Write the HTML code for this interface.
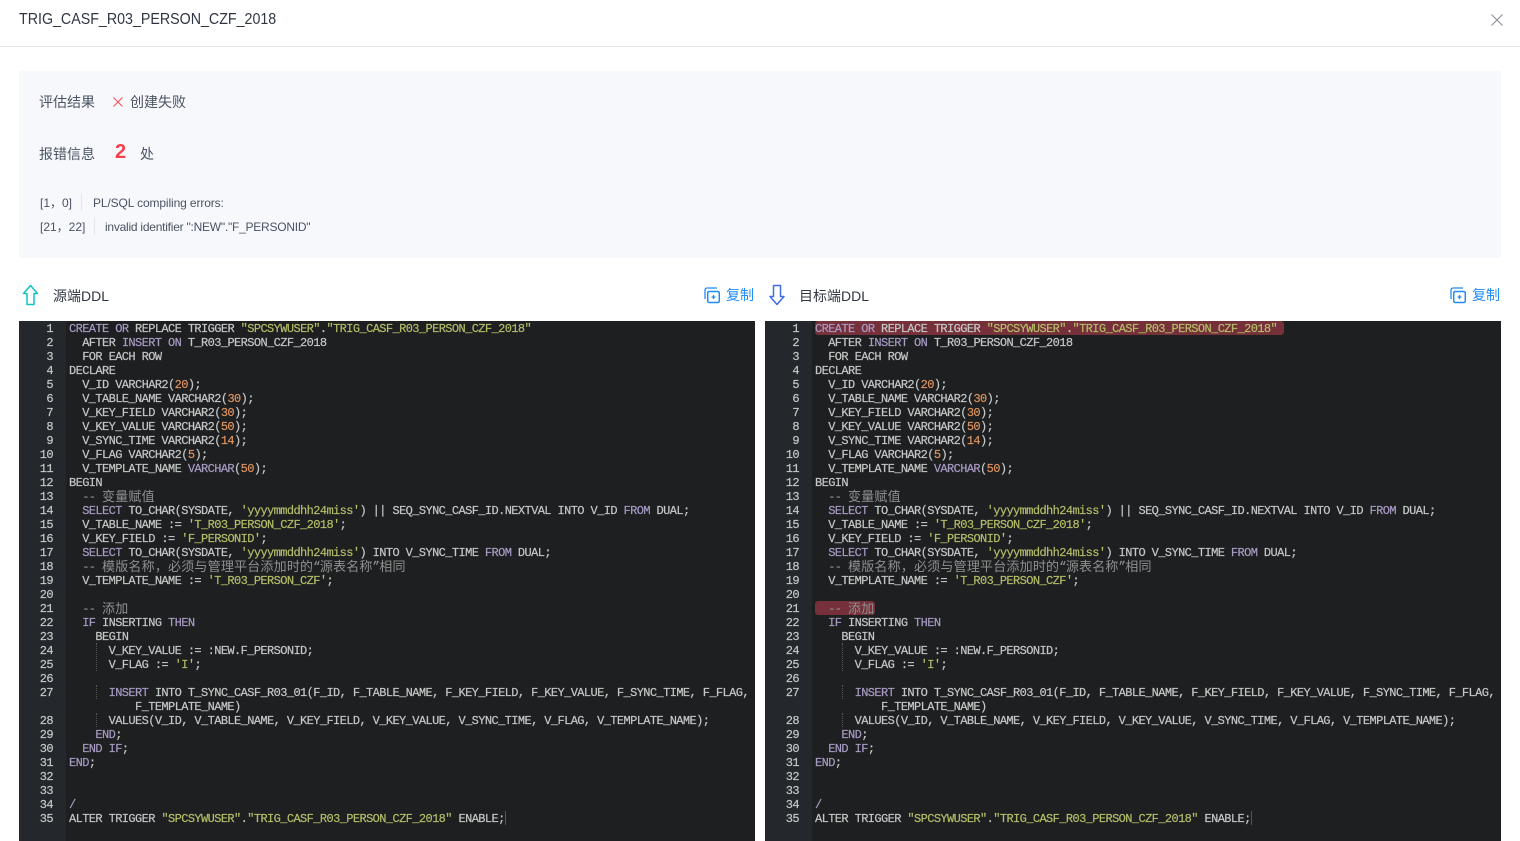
<!DOCTYPE html>
<html lang="zh"><head><meta charset="utf-8"><title>TRIG_CASF_R03_PERSON_CZF_2018</title>
<style>
*{box-sizing:border-box}
html,body{margin:0;padding:0;width:1520px;height:841px;overflow:hidden;background:#fff}
body{font-family:"Liberation Sans","Noto Sans CJK SC",sans-serif;color:#4a5363;position:relative}
.a{position:absolute;white-space:nowrap}
.ed{position:absolute;top:321px;width:736px;height:520px;background:#1d1f21;overflow:hidden}
.gut{position:absolute;left:0;top:0;width:47px;height:520px;background:#24272c}
.nums,.code{position:absolute;top:1px;margin:0;font:12px/14px "Liberation Mono",monospace;letter-spacing:-.6px;color:#c5c8c6;-webkit-text-stroke:.2px}
.nums{left:0;width:34px;text-align:right;color:#c5c8c6}
.code{left:50px}
.code i{font-style:normal;color:#a99bc4}
.code s{text-decoration:none;color:#b5bd68}
.code b{font-weight:normal;color:#de935f}
.code u{text-decoration:none;color:#8f9190}
.code em{font:13px/0 "Noto Sans CJK SC",sans-serif;font-style:normal;letter-spacing:.2px;color:#8f9190;-webkit-text-stroke:0;position:relative;top:1px}
.hl{position:absolute;background:#75303a;border-radius:3px;height:14px}
.g{position:absolute;left:77px;width:0;border-left:1px dotted #55585b}
.cur{position:absolute;width:1px;height:14px;top:490px;left:486px;background:#555}
.err{font-size:12px;color:#4a5363}
.sep{position:absolute;width:1px;height:18px;background:#e3e5ea}
.copy{color:#1f8cf5;font-size:14px}
</style></head><body>
<div class="a" style="left:19px;top:10px;font-size:16px;line-height:20px;color:#2f3542;transform:scaleX(.89);transform-origin:0 0">TRIG_CASF_R03_PERSON_CZF_2018</div>
<svg class="a" style="left:1490px;top:13px" width="14" height="14" viewBox="0 0 14 14"><path d="M1.5 1.5L12.5 12.5M12.5 1.5L1.5 12.5" stroke="#909399" stroke-width="1.2" fill="none"/></svg>
<div class="a" style="left:0;top:46px;width:1520px;height:1px;background:#e8e8e8"></div>
<div class="a" style="left:19px;top:71px;width:1482px;height:187px;background:#f7f8fc"></div>
<div class="a" style="left:39px;top:93px;font-size:14px;line-height:18px">评估结果</div>
<svg class="a" style="left:112px;top:96px" width="12" height="12" viewBox="0 0 12 12"><path d="M1.5 1.5L10.5 10.5M10.5 1.5L1.5 10.5" stroke="#f5535c" stroke-width="1.1" fill="none"/></svg>
<div class="a" style="left:130px;top:93px;font-size:14px;line-height:18px">创建失败</div>
<div class="a" style="left:39px;top:145px;font-size:14px;line-height:18px">报错信息</div>
<div class="a" style="left:115px;top:140px;font-size:20px;line-height:24px;font-weight:bold;color:#f5404c">2</div>
<div class="a" style="left:140px;top:145px;font-size:14px;line-height:18px">处</div>
<div class="a err" style="left:40px;top:195px;line-height:16px">[1，0]</div>
<div class="sep" style="left:81px;top:193px"></div>
<div class="a err" style="left:93px;top:195px;line-height:16px;letter-spacing:-.12px">PL/SQL compiling errors:</div>
<div class="a err" style="left:40px;top:219px;line-height:16px">[21，22]</div>
<div class="sep" style="left:94px;top:217px"></div>
<div class="a err" style="left:105px;top:219px;line-height:16px;letter-spacing:-.24px">invalid identifier ":NEW"."F_PERSONID"</div>

<svg class="a" style="left:21px;top:283px" width="20" height="24" viewBox="0 0 20 24"><path d="M9.5 2.5L16.5 10.500H13V21.500H6V10.500H2.500Z" fill="none" stroke="#13c2c2" stroke-width="1.500" stroke-linejoin="round"/></svg>
<div class="a" style="left:53px;top:287px;font-size:14px;line-height:18px;color:#2f3542">源端DDL</div>
<svg class="a" style="left:704px;top:287px" width="16" height="17" viewBox="0 0 16 17"><path d="M1 12V3a2 2 0 0 1 2-2h10" fill="none" stroke="#1f8cf5" stroke-width="1.300"/><rect x="3.700" y="4.500" width="11.600" height="11" rx="1.500" fill="none" stroke="#1f8cf5" stroke-width="1.500"/><path d="M7.500 10h4M9.500 8v4" stroke="#1f8cf5" stroke-width="1.300"/></svg>
<div class="a copy" style="left:726px;top:286px;line-height:18px">复制</div>
<svg class="a" style="left:767px;top:283px" width="20" height="24" viewBox="0 0 20 24"><path d="M6.500 2.500H13.500V13.500H17L10 21.500L3 13.500H6.500Z" fill="none" stroke="#3f6fe8" stroke-width="1.500" stroke-linejoin="round"/></svg>
<div class="a" style="left:799px;top:287px;font-size:14px;line-height:18px;color:#2f3542">目标端DDL</div>
<svg class="a" style="left:1450px;top:287px" width="16" height="17" viewBox="0 0 16 17"><path d="M1 12V3a2 2 0 0 1 2-2h10" fill="none" stroke="#1f8cf5" stroke-width="1.300"/><rect x="3.700" y="4.500" width="11.600" height="11" rx="1.500" fill="none" stroke="#1f8cf5" stroke-width="1.500"/><path d="M7.500 10h4M9.500 8v4" stroke="#1f8cf5" stroke-width="1.300"/></svg>
<div class="a copy" style="left:1472px;top:286px;line-height:18px">复制</div>

<div class="ed" style="left:19px">
<div class="gut"></div>
<div class="g" style="top:322px;height:28px"></div><div class="g" style="top:364px;height:14px"></div><div class="g" style="top:392px;height:14px"></div>
<pre class="nums">1
2
3
4
5
6
7
8
9
10
11
12
13
14
15
16
17
18
19
20
21
22
23
24
25
26
27

28
29
30
31
32
33
34
35</pre>
<pre class="code"><i>CREATE</i> <i>OR</i> REPLACE TRIGGER <s>"SPCSYWUSER"</s>.<s>"TRIG_CASF_R03_PERSON_CZF_2018"</s>
  AFTER <i>INSERT</i> <i>ON</i> T_R03_PERSON_CZF_2018
  FOR EACH ROW
DECLARE
  V_ID VARCHAR2(<b>20</b>);
  V_TABLE_NAME VARCHAR2(<b>30</b>);
  V_KEY_FIELD VARCHAR2(<b>30</b>);
  V_KEY_VALUE VARCHAR2(<b>50</b>);
  V_SYNC_TIME VARCHAR2(<b>14</b>);
  V_FLAG VARCHAR2(<b>5</b>);
  V_TEMPLATE_NAME <i>VARCHAR</i>(<b>50</b>);
BEGIN
  <u>-- </u><em>变量赋值</em>
  <i>SELECT</i> TO_CHAR(SYSDATE, <s>'yyyymmddhh24miss'</s>) || SEQ_SYNC_CASF_ID.NEXTVAL INTO V_ID <i>FROM</i> DUAL;
  V_TABLE_NAME := <s>'T_R03_PERSON_CZF_2018'</s>;
  V_KEY_FIELD := <s>'F_PERSONID'</s>;
  <i>SELECT</i> TO_CHAR(SYSDATE, <s>'yyyymmddhh24miss'</s>) INTO V_SYNC_TIME <i>FROM</i> DUAL;
  <u>-- </u><em>模版名称，必须与管理平台添加时的</em><u>“</u><em>源表名称</em><u>”</u><em>相同</em>
  V_TEMPLATE_NAME := <s>'T_R03_PERSON_CZF'</s>;

  <u>-- </u><em>添加</em>
  <i>IF</i> INSERTING <i>THEN</i>
    BEGIN
      V_KEY_VALUE := :NEW.F_PERSONID;
      V_FLAG := <s>'I'</s>;

      <i>INSERT</i> INTO T_SYNC_CASF_R03_01(F_ID, F_TABLE_NAME, F_KEY_FIELD, F_KEY_VALUE, F_SYNC_TIME, F_FLAG,
          F_TEMPLATE_NAME)
      VALUES(V_ID, V_TABLE_NAME, V_KEY_FIELD, V_KEY_VALUE, V_SYNC_TIME, V_FLAG, V_TEMPLATE_NAME);
    <i>END</i>;
  <i>END</i> <i>IF</i>;
<i>END</i>;


<i>/</i>
ALTER TRIGGER <s>"SPCSYWUSER"</s>.<s>"TRIG_CASF_R03_PERSON_CZF_2018"</s> ENABLE;</pre>
<div class="cur"></div>
</div>

<div class="ed" style="left:765px">
<div class="gut"></div>
<div class="hl" style="left:50px;top:0;width:469px"></div>
<div class="hl" style="left:50px;top:280px;width:60px"></div>
<div class="g" style="top:322px;height:28px"></div><div class="g" style="top:364px;height:14px"></div><div class="g" style="top:392px;height:14px"></div>
<pre class="nums">1
2
3
4
5
6
7
8
9
10
11
12
13
14
15
16
17
18
19
20
21
22
23
24
25
26
27

28
29
30
31
32
33
34
35</pre>
<pre class="code"><i>CREATE</i> <i>OR</i> REPLACE TRIGGER <s>"SPCSYWUSER"</s>.<s>"TRIG_CASF_R03_PERSON_CZF_2018"</s>
  AFTER <i>INSERT</i> <i>ON</i> T_R03_PERSON_CZF_2018
  FOR EACH ROW
DECLARE
  V_ID VARCHAR2(<b>20</b>);
  V_TABLE_NAME VARCHAR2(<b>30</b>);
  V_KEY_FIELD VARCHAR2(<b>30</b>);
  V_KEY_VALUE VARCHAR2(<b>50</b>);
  V_SYNC_TIME VARCHAR2(<b>14</b>);
  V_FLAG VARCHAR2(<b>5</b>);
  V_TEMPLATE_NAME <i>VARCHAR</i>(<b>50</b>);
BEGIN
  <u>-- </u><em>变量赋值</em>
  <i>SELECT</i> TO_CHAR(SYSDATE, <s>'yyyymmddhh24miss'</s>) || SEQ_SYNC_CASF_ID.NEXTVAL INTO V_ID <i>FROM</i> DUAL;
  V_TABLE_NAME := <s>'T_R03_PERSON_CZF_2018'</s>;
  V_KEY_FIELD := <s>'F_PERSONID'</s>;
  <i>SELECT</i> TO_CHAR(SYSDATE, <s>'yyyymmddhh24miss'</s>) INTO V_SYNC_TIME <i>FROM</i> DUAL;
  <u>-- </u><em>模版名称，必须与管理平台添加时的</em><u>“</u><em>源表名称</em><u>”</u><em>相同</em>
  V_TEMPLATE_NAME := <s>'T_R03_PERSON_CZF'</s>;

  <u>-- </u><em>添加</em>
  <i>IF</i> INSERTING <i>THEN</i>
    BEGIN
      V_KEY_VALUE := :NEW.F_PERSONID;
      V_FLAG := <s>'I'</s>;

      <i>INSERT</i> INTO T_SYNC_CASF_R03_01(F_ID, F_TABLE_NAME, F_KEY_FIELD, F_KEY_VALUE, F_SYNC_TIME, F_FLAG,
          F_TEMPLATE_NAME)
      VALUES(V_ID, V_TABLE_NAME, V_KEY_FIELD, V_KEY_VALUE, V_SYNC_TIME, V_FLAG, V_TEMPLATE_NAME);
    <i>END</i>;
  <i>END</i> <i>IF</i>;
<i>END</i>;


<i>/</i>
ALTER TRIGGER <s>"SPCSYWUSER"</s>.<s>"TRIG_CASF_R03_PERSON_CZF_2018"</s> ENABLE;</pre>
<div class="cur"></div>
</div>
</body></html>
